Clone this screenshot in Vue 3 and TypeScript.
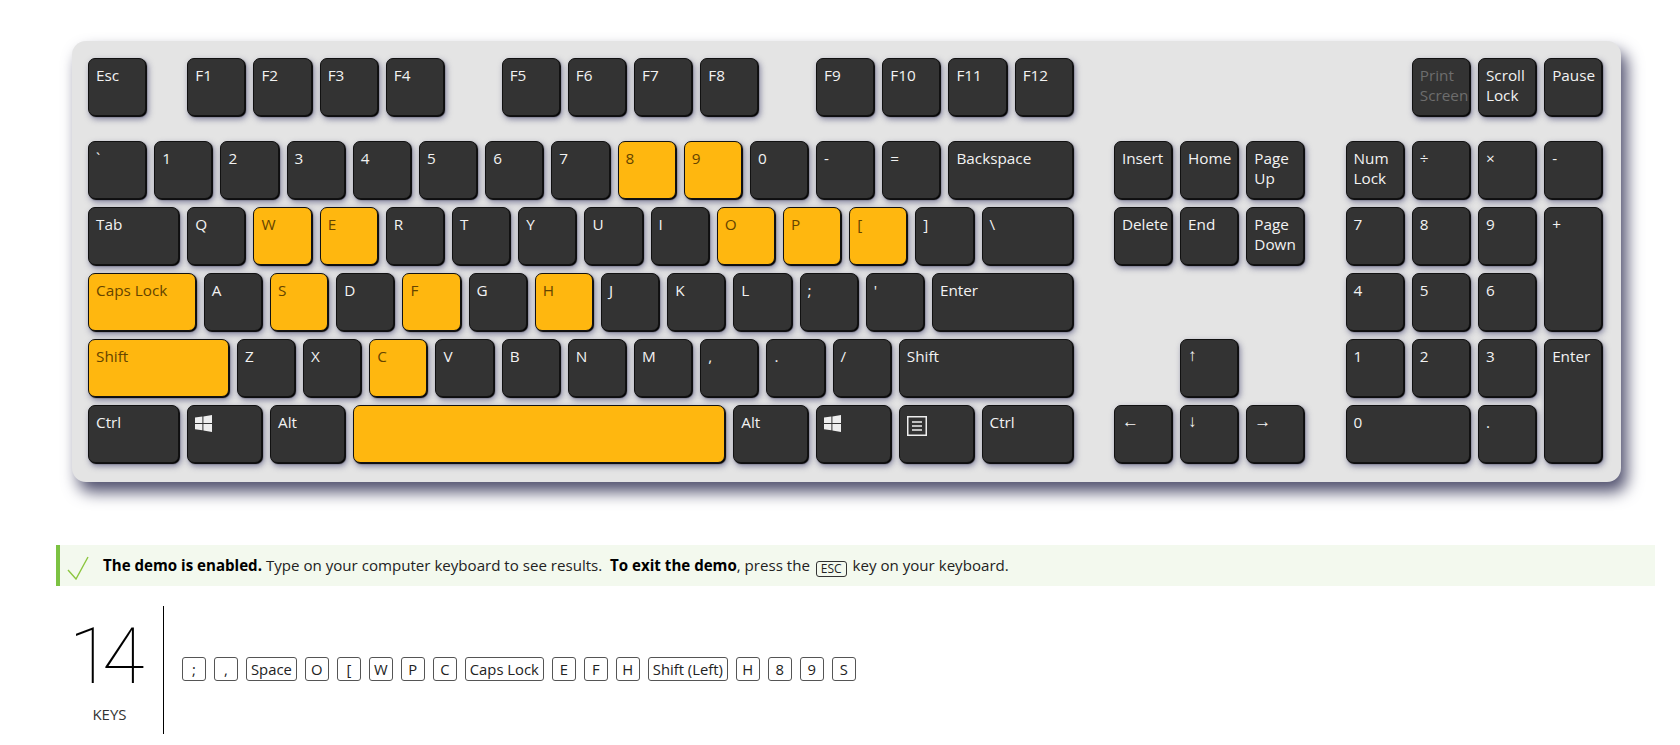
<script setup lang="ts">
type Item = string | [string, number] | [string, number, number]
interface Key { label: string; x: number; r: number; w: number; h: number; on: boolean; dim: boolean; arrow: boolean; icon: string }

const hot = new Set(['8', '9', 'W', 'E', 'O', 'P', '[', 'Caps Lock', 'S', 'F', 'H', 'C', 'Shift-L', ' '])
const keys: Key[] = []

function row(r: number, start: number, items: Item[]) {
  let x = start
  for (const it of items) {
    const name = typeof it === 'string' ? it : it[0]
    const w = typeof it === 'string' ? 1 : it[1]
    const h = typeof it === 'string' ? 1 : it[2] ?? 1
    if (name !== '') {
      keys.push({
        label: name === 'Shift-L' ? 'Shift' : name === 'Win' || name === 'Menu' ? '' : name,
        x, r, w, h,
        on: hot.has(name),
        dim: name === 'Print\nScreen',
        arrow: '←↑↓→'.includes(name),
        icon: name === 'Win' ? 'win' : name === 'Menu' ? 'menu' : '',
      })
    }
    x += w
  }
}

row(0, 0, ['Esc', ['', 0.5], 'F1', 'F2', 'F3', 'F4', ['', 0.75], 'F5', 'F6', 'F7', 'F8', ['', 0.75], 'F9', 'F10', 'F11', 'F12'])
row(0, 20, ['Print\nScreen', 'Scroll\nLock', 'Pause'])
row(1, 0, ['`', '1', '2', '3', '4', '5', '6', '7', '8', '9', '0', '-', '=', ['Backspace', 2]])
row(1, 15.5, ['Insert', 'Home', 'Page\nUp'])
row(1, 19, ['Num\nLock', '÷', '×', '-'])
row(2, 0, [['Tab', 1.5], 'Q', 'W', 'E', 'R', 'T', 'Y', 'U', 'I', 'O', 'P', '[', ']', ['\\', 1.5]])
row(2, 15.5, ['Delete', 'End', 'Page\nDown'])
row(2, 19, ['7', '8 ', '9 ', ['+', 1, 2]])
row(3, 0, [['Caps Lock', 1.75], 'A', 'S', 'D', 'F', 'G', 'H', 'J', 'K', 'L', ';', "'", ['Enter', 2.25]])
row(3, 19, ['4', '5', '6'])
row(4, 0, [['Shift-L', 2.25], 'Z', 'X', 'C', 'V', 'B', 'N', 'M', ',', '.', '/', ['Shift', 2.75]])
row(4, 16.5, ['↑'])
row(4, 19, ['1', '2', '3', ['Enter', 1, 2]])
row(5, 0, [['Ctrl', 1.5], ['Win', 1.25], ['Alt', 1.25], [' ', 5.75], ['Alt', 1.25], ['Win', 1.25], ['Menu', 1.25], ['Ctrl', 1.5]])
row(5, 15.5, ['←', '↓', '→'])
row(5, 19, [['0', 2], '.'])

function place(k: Key) {
  const startRow = k.r === 0 ? 1 : k.r + 2
  return {
    gridColumn: `${Math.round(k.x * 4) + 1} / span ${Math.round(k.w * 4)}`,
    gridRow: `${startRow} / span ${k.h}`,
  }
}

const pressed = [';', ',', 'Space', 'O', '[', 'W', 'P', 'C', 'Caps Lock', 'E', 'F', 'H', 'Shift (Left)', 'H', '8', '9', 'S']
</script>

<template>
  <main class="page">
    <section class="keyboard">
      <div
        v-for="(k, i) in keys"
        :key="i"
        class="key"
        :class="{ on: k.on, dim: k.dim, arrow: k.arrow }"
        :style="place(k)"
      >
        <svg v-if="k.icon === 'win'" class="win" viewBox="0 0 17 17" aria-hidden="true">
          <path d="M0 2.6 7.4 1.5V8H0ZM8.4 1.4 17 0V8H8.4ZM0 9H7.4V15.3L0 14.3ZM8.4 9H17V17L8.4 15.5Z" />
        </svg>
        <svg v-else-if="k.icon === 'menu'" class="menu" viewBox="0 0 20 20" aria-hidden="true">
          <path d="M.75.75H19.25V19.25H.75ZM5 6H15M5 10H15M5 14H15" />
        </svg>
        <template v-else>{{ k.label }}</template>
      </div>
    </section>

    <section class="notice">
      <svg class="check" viewBox="0 0 24 24" aria-hidden="true"><path d="M1 14 9 23 21 1" /></svg>
      <p><b>The demo is enabled.</b> Type on your computer keyboard to see results.&nbsp; <b>To exit the demo</b>, press the <kbd>ESC</kbd> key on your keyboard.</p>
    </section>

    <section class="result">
      <div class="count">
        <div class="num">14</div>
        <div class="unit">KEYS</div>
      </div>
      <div class="chips">
        <span v-for="(c, i) in pressed" :key="i" class="chip">{{ c }}</span>
      </div>
    </section>
  </main>
</template>

<style>
html, body { margin: 0; background: #fff; }
</style>

<style scoped>
.page {
  box-sizing: border-box;
  width: 1680px;
  height: 745px;
  overflow: hidden;
  padding: 41px 25px 0 56px;
  font-family: "Open Sans", "Noto Sans", sans-serif;
  color: #222;
}
.keyboard {
  display: grid;
  grid-template-columns: repeat(92, 16.55px);
  grid-template-rows: 66px 17px repeat(5, 66px);
  width: max-content;
  margin-left: 16px;
  padding: 17px 11px 11px 16px;
  background: #e4e4e4;
  border-radius: 14px;
  box-shadow: 6px 10px 16px #50506e;
}
.key {
  box-sizing: border-box;
  margin: 0 8px 8px 0;
  padding: 6px 0 0 7px;
  border: 1px solid #111;
  border-radius: 7px;
  background: #333;
  color: #f2f2f2;
  font-size: 15.3px;
  line-height: 20px;
  white-space: pre;
  box-shadow: 1px 1px 1px #000, 2px 3px 6px rgba(50, 50, 100, .6);
}
.key.on { background: #ffb70f; color: #654400; }
.key.dim { color: #6d6d6d; }
.key.arrow { font-size: 17px; line-height: 18px; }
.win { display: block; width: 17px; height: 17px; margin-top: 3px; fill: #eee; }
.menu { display: block; width: 20px; height: 20px; margin-top: 4px; fill: none; stroke: #eee; stroke-width: 1.5; }

.notice {
  display: flex;
  align-items: center;
  height: 41px;
  margin-top: 63px;
  border-left: 4px solid #7cc242;
  background: #f3f9ee;
}
.check { width: 24px; height: 24px; margin: 5px 12px 0 7px; flex: none; fill: none; stroke: #8cc63f; stroke-width: 1.4; }
.notice p { margin: 0; font-size: 15.1px; line-height: 20px; }
.notice b { color: #000; }
kbd {
  display: inline-block;
  box-sizing: border-box;
  height: 16px;
  margin: 0 2px;
  padding: 0 4px;
  border: 1px solid #333;
  border-radius: 3px;
  font-family: inherit;
  font-size: 12px;
  line-height: 14px;
  vertical-align: -2px;
}

.result {
  display: flex;
  align-items: stretch;
  height: 128px;
  margin-top: 20px;
}
.count {
  box-sizing: border-box;
  width: 108px;
  border-right: 1px solid #000;
  text-align: center;
}
.num {
  margin: 11px 0 -1px 13px;
  font-family: Roboto, sans-serif;
  font-weight: 100;
  font-size: 77px;
  line-height: 80px;
  letter-spacing: -9px;
  text-align: left;
  color: #000;
}
.unit { margin-top: 8px; font-size: 15px; line-height: 20px; color: #333; }
.chips {
  display: flex;
  align-items: center;
  gap: 8px;
  padding: 0 0 2px 18px;
}
.chip {
  box-sizing: border-box;
  min-width: 24px;
  height: 24px;
  padding: 0 4px;
  border: 1px solid #555;
  border-radius: 3px;
  font-size: 14.8px;
  line-height: 22px;
  text-align: center;
}
</style>
